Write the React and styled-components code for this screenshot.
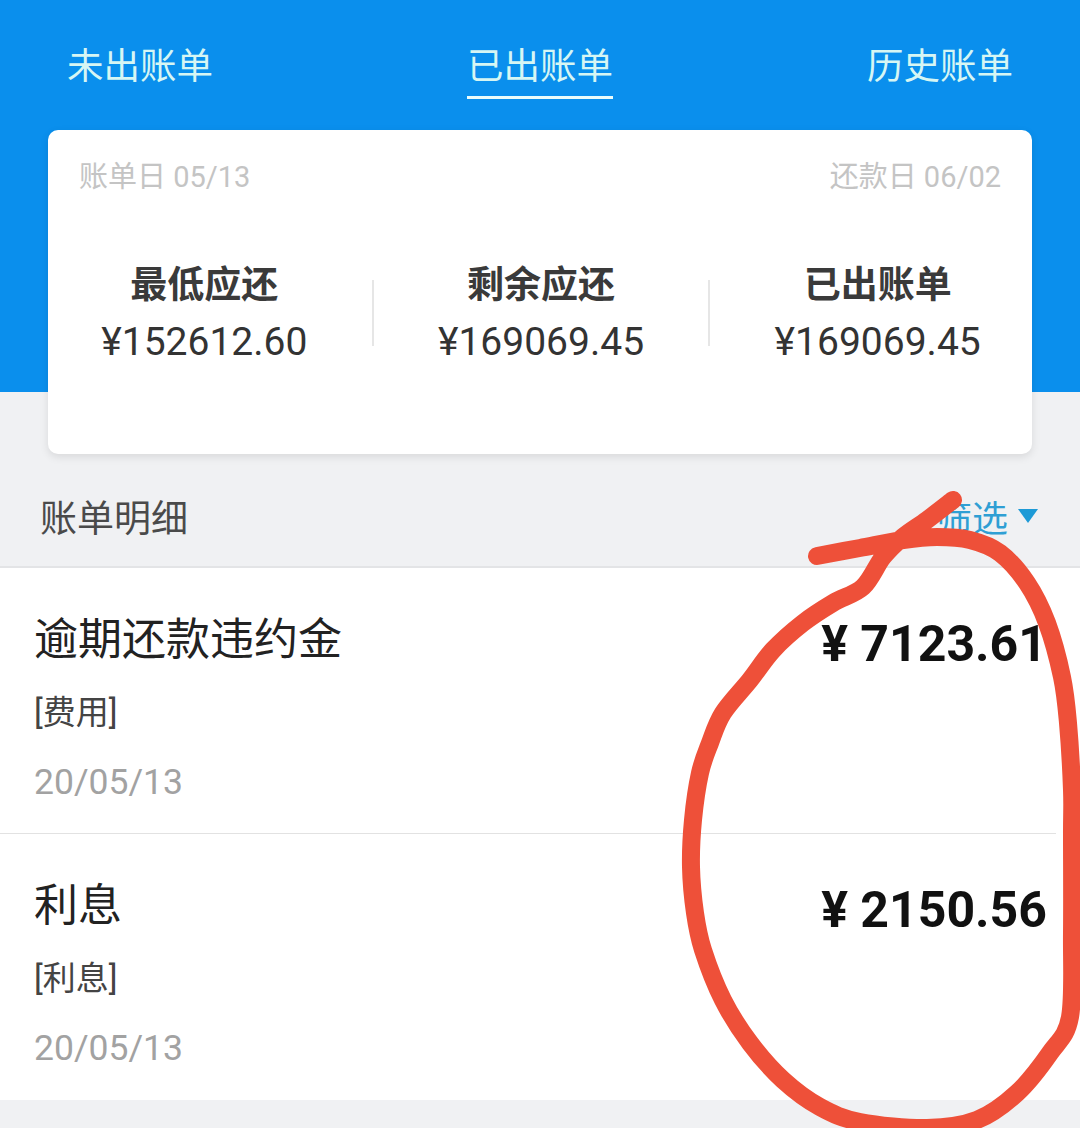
import React from 'react';
import styled, { createGlobalStyle } from 'styled-components';

const fontStack = `Roboto, "Noto Sans CJK SC", sans-serif`;

const tabs = [
   { label: '未出账单' },
   { label: '已出账单', active: true },
   { label: '历史账单' },
];

const summary = [
   { title: '最低应还', amount: '¥152612.60' },
   { title: '剩余应还', amount: '¥169069.45' },
   { title: '已出账单', amount: '¥169069.45' },
];

const bills = [
   { name: '逾期还款违约金', type: '[费用]', date: '20/05/13', amount: '¥ 7123.61' },
   { name: '利息', type: '[利息]', date: '20/05/13', amount: '¥ 2150.56' },
];

// hand-drawn red circle, points read off the picture
const scribble = [
   [953, 500], [927, 520], [903, 537], [883, 557], [863, 587], [833, 603], [803, 623],
   [773, 650], [750, 680], [723, 713], [710, 743], [700, 773], [693, 820], [691, 867],
   [695, 913], [703, 950], [723, 1000], [750, 1043], [783, 1080], [820, 1107], [860, 1122],
   [927, 1128], [977, 1120], [1017, 1093], [1050, 1053], [1070, 1017], [1072, 933],
   [1072, 833], [1072, 790], [1068, 723], [1062, 677], [1047, 623], [1027, 583],
   [1000, 553], [970, 540], [937, 537], [903, 540], [860, 548], [817, 556],
];

const smoothPath = (pts) => {
   let d = `M${pts[0][0]} ${pts[0][1]}`;
   for (let i = 0; i < pts.length - 1; i++) {
      const a = pts[i - 1] || pts[i];
      const b = pts[i];
      const c = pts[i + 1];
      const e = pts[i + 2] || c;
      d += ` C${b[0] + (c[0] - a[0]) / 6} ${b[1] + (c[1] - a[1]) / 6} ${c[0] - (e[0] - b[0]) / 6} ${c[1] - (e[1] - b[1]) / 6} ${c[0]} ${c[1]}`;
   }
   return d;
};

const App = () => {
   return (
      <Page>
         <GlobalStyle />
         <Header>
            <Tabs>
               {tabs.map((tab) => (
                  <Tab key={tab.label} $active={tab.active}>{tab.label}</Tab>
               ))}
            </Tabs>
            <Card>
               <CardDates>
                  <span>账单日 05/13</span>
                  <span>还款日 06/02</span>
               </CardDates>
               <Summary>
                  {summary.map((item, i) => (
                     <React.Fragment key={item.title}>
                        {i > 0 && <SummaryDivider />}
                        <SummaryItem>
                           <SummaryTitle>{item.title}</SummaryTitle>
                           <SummaryAmount>{item.amount}</SummaryAmount>
                        </SummaryItem>
                     </React.Fragment>
                  ))}
               </Summary>
            </Card>
         </Header>
         <SectionBar>
            <SectionTitle>账单明细</SectionTitle>
            <Filter>筛选<FilterArrow /></Filter>
         </SectionBar>
         <BillList>
            {bills.map((bill) => (
               <BillRow key={bill.name}>
                  <BillInfo>
                     <BillName>{bill.name}</BillName>
                     <BillType>{bill.type}</BillType>
                     <BillDate>{bill.date}</BillDate>
                  </BillInfo>
                  <BillAmount>{bill.amount}</BillAmount>
               </BillRow>
            ))}
         </BillList>
         <Scribble viewBox="0 0 1080 1128" aria-hidden="true">
            <path
               d={smoothPath(scribble)}
               fill="none"
               stroke="#ee5039"
               strokeWidth="18"
               strokeLinecap="round"
               strokeLinejoin="round"
            />
         </Scribble>
      </Page>
   );
};

export default App;

const GlobalStyle = createGlobalStyle`
   html, body {
      margin: 0;
      padding: 0;
      background: #f0f1f3;
   }
`;
const Page = styled.div`
   position: relative;
   width: 1080px;
   height: 1128px;
   overflow: hidden;
   background: #f0f1f3;
   font-family: ${fontStack};
`;
const Header = styled.div`
   height: 392px;
   padding: 0 48px;
   box-sizing: border-box;
   background: #0a8fed;
`;
const Tabs = styled.div`
   display: flex;
   justify-content: space-between;
   height: 130px;
   padding: 0 19px 0 19px;
`;
const Tab = styled.div`
   align-self: flex-start;
   margin-top: 42px;
   height: 57px;
   padding-top: 1px;
   line-height: 48px;
   box-sizing: border-box;
   font-size: 36.5px;
   color: #d6f6f4;
   border-bottom: ${(p) => (p.$active ? '3px solid #eafcfb' : '3px solid transparent')};
`;
const Card = styled.div`
   height: 324px;
   box-sizing: border-box;
   padding: 28px 31px 0;
   background: #fff;
   border-radius: 10px;
   box-shadow: 0 3px 8px rgba(0, 0, 0, 0.1);
`;
const CardDates = styled.div`
   display: flex;
   justify-content: space-between;
   font-size: 29px;
   line-height: 38px;
   color: #c4c4c4;
`;
const Summary = styled.div`
   display: flex;
   align-items: center;
   margin: 65px -44px 0 -42px;
`;
const SummaryDivider = styled.div`
   width: 2px;
   height: 66px;
   margin-top: -2px;
   background: #e6e6e6;
`;
const SummaryItem = styled.div`
   flex: 1;
   display: flex;
   flex-direction: column;
   align-items: center;
   gap: 6px;
`;
const SummaryTitle = styled.div`
   font-size: 37px;
   line-height: 50px;
   font-weight: 700;
   color: #3a3a3a;
`;
const SummaryAmount = styled.div`
   font-size: 39px;
   line-height: 50px;
   color: #333;
`;
const SectionBar = styled.div`
   display: flex;
   justify-content: space-between;
   align-items: center;
   height: 176px;
   padding: 74px 42px 0 40px;
   box-sizing: border-box;
   border-bottom: 2px solid #e3e4e6;
`;
const SectionTitle = styled.div`
   font-size: 37px;
   color: #4a4a4a;
`;
const Filter = styled.div`
   display: flex;
   align-items: center;
   gap: 10px;
   font-size: 36px;
   color: #2f9fd4;
`;
const FilterArrow = styled.i`
   width: 0;
   height: 0;
   border-left: 10px solid transparent;
   border-right: 10px solid transparent;
   border-top: 14px solid #1d9ad6;
`;
const BillList = styled.div`
   background: #fff;
`;
const BillRow = styled.div`
   position: relative;
   display: flex;
   justify-content: space-between;
   align-items: flex-start;
   height: 266px;
   box-sizing: border-box;
   padding: 42px 33px 0 34px;
   &:not(:last-child)::after {
      content: '';
      position: absolute;
      left: 0;
      right: 24px;
      bottom: 0;
      height: 1px;
      background: #e2e2e2;
   }
`;
const BillInfo = styled.div`
   display: flex;
   flex-direction: column;
`;
const BillName = styled.div`
   font-size: 44px;
   line-height: 60px;
   color: #222;
`;
const BillType = styled.div`
   margin-top: 20px;
   font-size: 33px;
   line-height: 46px;
   color: #444;
`;
const BillDate = styled.div`
   margin-top: 23px;
   font-size: 35.5px;
   line-height: 46px;
   color: #a2a2a2;
`;
const BillAmount = styled.div`
   margin-top: 4px;
   font-size: 50px;
   line-height: 60px;
   font-weight: 700;
   color: #111;
`;
const Scribble = styled.svg`
   position: absolute;
   inset: 0;
   width: 100%;
   height: 100%;
   pointer-events: none;
`;
